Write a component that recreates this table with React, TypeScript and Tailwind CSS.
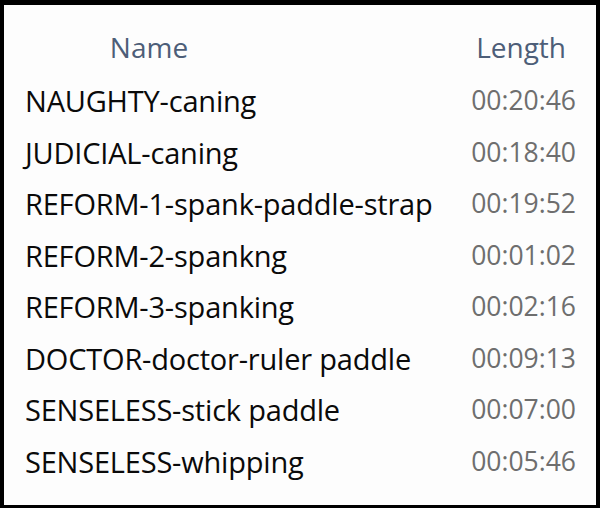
const rows = [
  ["NAUGHTY-caning", "00:20:46"],
  ["JUDICIAL-caning", "00:18:40"],
  ["REFORM-1-spank-paddle-strap", "00:19:52"],
  ["REFORM-2-spankng", "00:01:02"],
  ["REFORM-3-spanking", "00:02:16"],
  ["DOCTOR-doctor-ruler paddle", "00:09:13"],
  ["SENSELESS-stick paddle", "00:07:00"],
  ["SENSELESS-whipping", "00:05:46"],
];

export default function App() {
  return (
    <div className="w-[600px] h-[508px] bg-black pt-[5px] pl-[4px] pr-[4px] pb-[3px]">
      <div
        className="h-full bg-[#fdfdfd] flex flex-col"
        style={{ fontFamily: '"Open Sans", "Noto Sans", sans-serif' }}
      >
        {/* header */}
        <div className="flex h-[70px] items-center text-[28px] text-[#4d5e78]">
          <div className="w-[290px] text-center pt-[14px]">Name</div>
          <div className="flex-1 text-right pr-[30px] pt-[14px]">Length</div>
        </div>
        {rows.map(([name, len]) => (
          <div key={name} className="flex items-center h-[51.5px] leading-[51.5px]">
            <div className="flex-1 pl-[21px] text-[29px] tracking-[-0.2px] text-[#0a0a0a]">{name}</div>
            <div className="pr-[20px] text-[26.5px] text-[#6e6e6e]">{len}</div>
          </div>
        ))}
      </div>
    </div>
  );
}
